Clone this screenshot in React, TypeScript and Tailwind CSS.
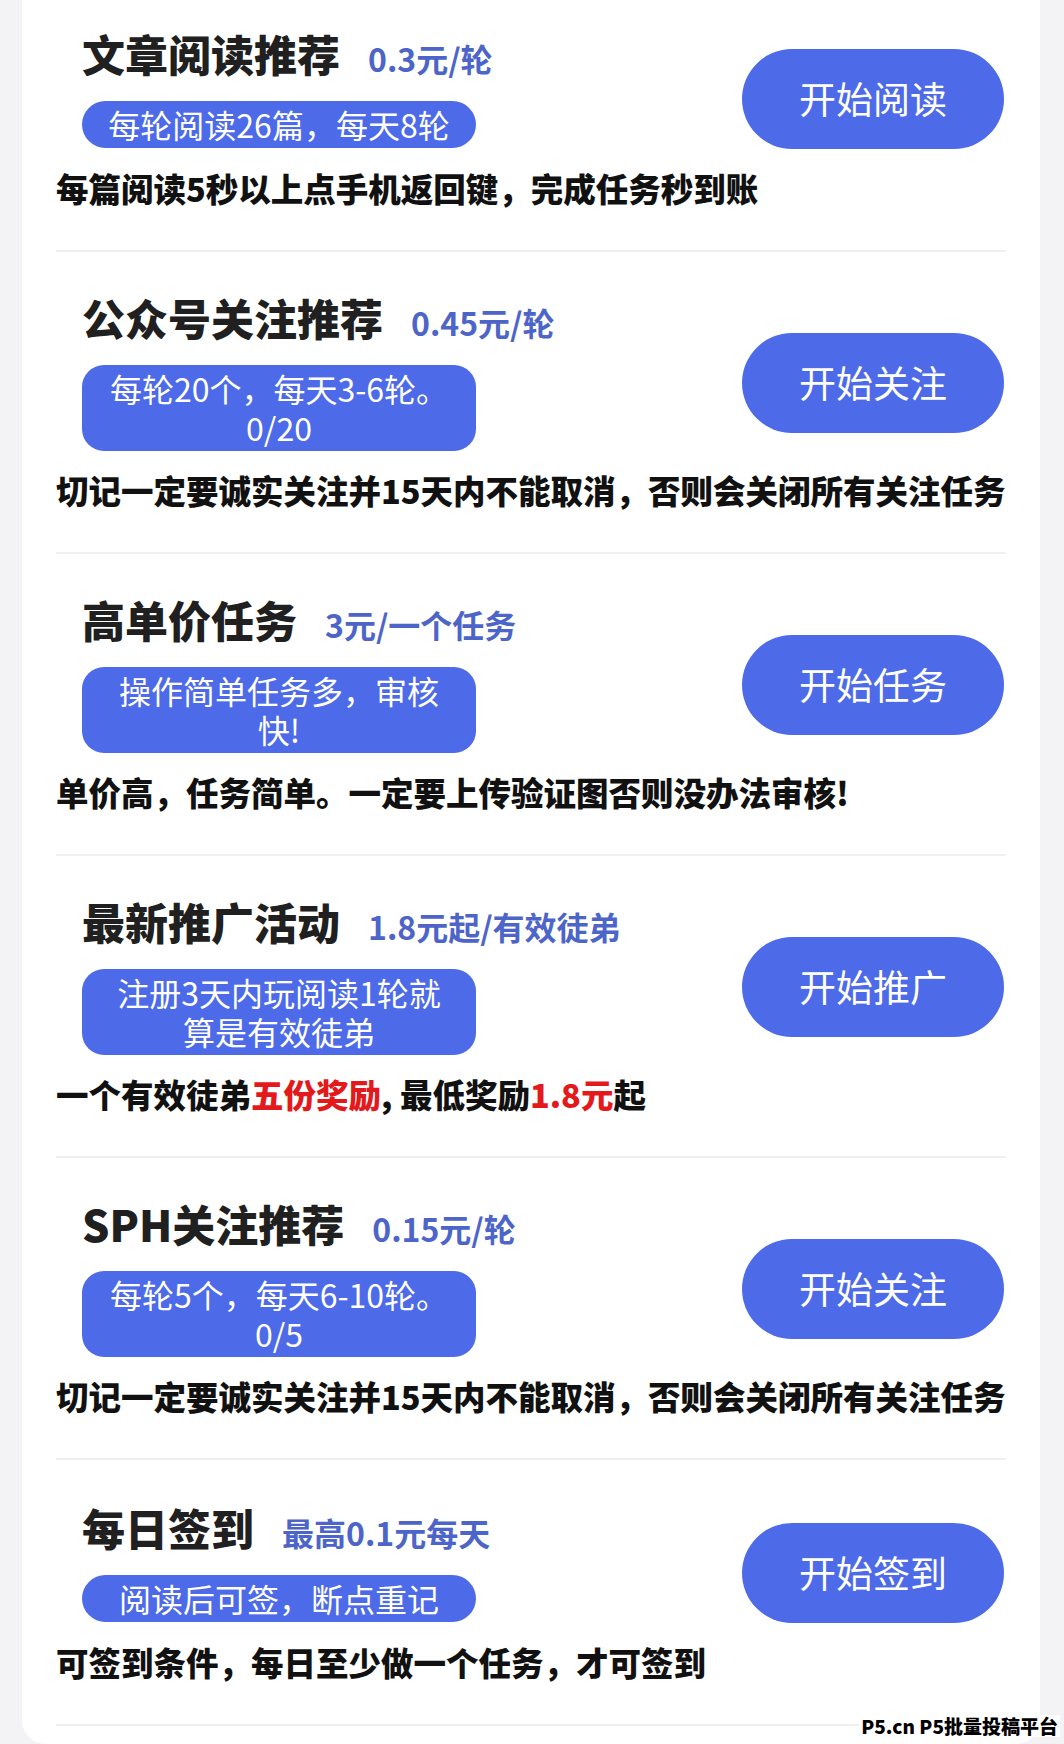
import type { ReactNode } from 'react';

type Task = {
  title: string;
  price: string;
  pill: string[];
  desc: ReactNode;
  button: string;
};

const tasks: Task[] = [
  {
    title: '文章阅读推荐',
    price: '0.3元/轮',
    pill: ['每轮阅读26篇，每天8轮'],
    desc: '每篇阅读5秒以上点手机返回键，完成任务秒到账',
    button: '开始阅读',
  },
  {
    title: '公众号关注推荐',
    price: '0.45元/轮',
    pill: ['每轮20个，每天3-6轮。', '0/20'],
    desc: '切记一定要诚实关注并15天内不能取消，否则会关闭所有关注任务',
    button: '开始关注',
  },
  {
    title: '高单价任务',
    price: '3元/一个任务',
    pill: ['操作简单任务多，审核', '快!'],
    desc: '单价高，任务简单。一定要上传验证图否则没办法审核!',
    button: '开始任务',
  },
  {
    title: '最新推广活动',
    price: '1.8元起/有效徒弟',
    pill: ['注册3天内玩阅读1轮就', '算是有效徒弟'],
    desc: (
      <>
        一个有效徒弟<span className="text-[#e3191c]">五份奖励</span>, 最低奖励
        <span className="text-[#e3191c]">1.8元</span>起
      </>
    ),
    button: '开始推广',
  },
  {
    title: 'SPH关注推荐',
    price: '0.15元/轮',
    pill: ['每轮5个，每天6-10轮。', '0/5'],
    desc: '切记一定要诚实关注并15天内不能取消，否则会关闭所有关注任务',
    button: '开始关注',
  },
  {
    title: '每日签到',
    price: '最高0.1元每天',
    pill: ['阅读后可签，断点重记'],
    desc: '可签到条件，每日至少做一个任务，才可签到',
    button: '开始签到',
  },
];

function TaskRow({ task, first }: { task: Task; first: boolean }) {
  return (
    <div className={`border-b-2 border-[#f0f0f0] pb-[40px] ${first ? 'pt-[23px]' : 'pt-[37px]'}`}>
      <div className="flex items-center justify-between">
        <div className="ml-[26px]">
          <div className="flex h-[56px] items-baseline leading-[56px]">
            <h2 className="text-[43px] font-black text-[#202020]">{task.title}</h2>
            <span className="ml-[28px] text-[32px] font-bold text-[#4d65c8]">{task.price}</span>
          </div>
          <div
            className={`mt-5 w-[394px] bg-[#4d6ae8] py-[4px] text-center text-[32px] leading-[39px] text-white ${
              task.pill.length > 1 ? 'rounded-[22px]' : 'rounded-full'
            }`}
          >
            {task.pill.map((line, i) => (
              <div key={i}>{line}</div>
            ))}
          </div>
        </div>
        <button className="mr-[2px] mt-[26px] h-[100px] w-[262px] rounded-full bg-[#4d6ae8] text-[37px] text-white">
          {task.button}
        </button>
      </div>
      <p className="mt-[17px] whitespace-nowrap text-[32.5px] font-black leading-[44px] text-[#111]">
        {task.desc}
      </p>
    </div>
  );
}

export default function App() {
  return (
    <div className="relative h-[1744px] overflow-hidden bg-[#f3f3f5] pl-[22px] pr-[24px] font-['Noto_Sans_CJK_SC','Noto_Sans',sans-serif]">
      <div className="rounded-b-[24px] bg-white px-[34px] pb-[18px]">
        {tasks.map((task, i) => (
          <TaskRow key={i} task={task} first={i === 0} />
        ))}
      </div>

      <div className="absolute bottom-[7px] right-[4px] bg-white px-[2px] text-[19px] font-black leading-[22px] text-black">
        P5.cn P5批量投稿平台
      </div>
    </div>
  );
}
